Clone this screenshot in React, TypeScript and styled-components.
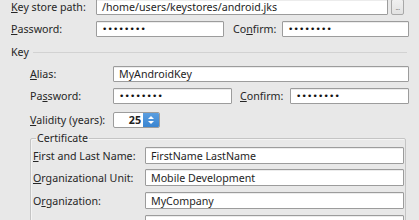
import React from "react";
import styled, { createGlobalStyle } from "styled-components";

const Global = createGlobalStyle`
  html, body { margin: 0; padding: 0; background: #e8e8e8; }
  body { font-family: "Noto Sans", "DejaVu Sans", sans-serif; font-size: 10.67px; color: #262626; }
`;

const Page = styled.div`
  width: 419px;
  height: 220px;
  overflow: hidden;
  box-sizing: border-box;
  padding: 0 10px 0 11px;
  background: #e8e8e8;
`;

const Stack = styled.div<{ $top?: number }>`
  display: flex;
  flex-direction: column;
  margin-top: ${(p) => p.$top ?? 0}px;
`;

const Row = styled.div<{ $h?: number; $mt?: number }>`
  display: flex;
  align-items: center;
  height: ${(p) => p.$h ?? 16}px;
  margin-top: ${(p) => p.$mt ?? 0}px;
`;

const Label = styled.span<{ $w?: number; $ml?: number }>`
  flex: 0 0 ${(p) => p.$w ?? 85}px;
  margin-left: ${(p) => p.$ml ?? 0}px;
  white-space: nowrap;
  line-height: 14px;
`;

const U = styled.span`
  text-decoration: underline;
  text-underline-offset: 1px;
`;

const Input = styled.div<{ $w?: number; $h?: number }>`
  box-sizing: border-box;
  ${(p) => (p.$w ? `flex: 0 0 ${p.$w}px;` : "flex: 1 1 auto;")}
  height: ${(p) => p.$h ?? 16}px;
  background: #fff;
  border: 1px solid #9c9c9c;
  border-radius: 1px;
  box-shadow: inset 0 1px 0 #ececec;
  padding: 0 5px;
  display: flex;
  align-items: center;
  white-space: nowrap;
  overflow: hidden;
  color: #1e1e1e;
`;

const Dots = styled.span`
  font-family: "DejaVu Sans", sans-serif;
  font-size: 9px;
  letter-spacing: 0.2px;
  color: #111;
`;

const DotsButton = styled.div`
  box-sizing: border-box;
  flex: 0 0 13px;
  height: 16px;
  margin-left: 3px;
  margin-right: 5px;
  border: 1px solid #a8a8a8;
  border-radius: 2px;
  background: linear-gradient(#f0f0f0, #e2e2e2);
  color: #888;
  font-size: 7px;
  display: flex;
  align-items: center;
  justify-content: center;
  letter-spacing: -0.5px;
`;

const SectionHead = styled.div`
  display: flex;
  align-items: center;
  height: 14px;
  margin-top: 8px;
`;

const SectionTitle = styled.span`
  line-height: 14px;
`;

const SectionLine = styled.div`
  flex: 1 1 auto;
  height: 1px;
  background: #d2d2d2;
  margin-left: 4px;
  margin-right: 2px;
`;

const Indent = styled.div`
  display: flex;
  flex-direction: column;
  padding-left: 19px;
`;

const Spin = styled.div`
  box-sizing: border-box;
  flex: 0 0 47px;
  height: 16px;
  display: flex;
  border: 1px solid #9c9c9c;
  border-radius: 2px;
  background: #fff;
  overflow: hidden;
`;

const SpinValue = styled.div`
  flex: 1 1 auto;
  display: flex;
  align-items: center;
  justify-content: flex-end;
  padding-right: 2px;
  font-weight: bold;
  color: #222;
`;

const SpinButtons = styled.div`
  flex: 0 0 16px;
  background: linear-gradient(#5a9ee0, #3a85d1);
  display: flex;
  flex-direction: column;
  align-items: center;
  justify-content: center;
`;

const Group = styled.fieldset`
  box-sizing: border-box;
  margin: 4px 3px 0 0;
  padding: 1px 1px 6px 2px;
  border: 1px solid #c4c4c4;
  border-radius: 2px;
  box-shadow: inset 1px 1px 0 #f4f4f4;
  display: flex;
  flex-direction: column;
  min-width: 0;
`;

const Legend = styled.legend`
  padding: 0 1px;
  margin-left: 3px;
  line-height: 12px;
`;

const CertRow = styled.div<{ $mt?: number }>`
  display: flex;
  align-items: center;
  height: 17px;
  margin-top: ${(p) => p.$mt ?? 6}px;
`;

export default function App() {
  return (
    <>
      <Global />
      <Page>
        <Stack $top={-1}>
          <Row>
            <Label>
              <U>K</U>ey store path:
            </Label>
            <Input>/home/users/keystores/android.jks</Input>
            <DotsButton>...</DotsButton>
          </Row>
          <Row $mt={6}>
            <Label>
              <U>P</U>assword:
            </Label>
            <Input $w={128}>
              <Dots>••••••••</Dots>
            </Input>
            <Label $w={49} $ml={9}>
              Co<U>n</U>firm:
            </Label>
            <Input>
              <Dots>••••••••</Dots>
            </Input>
          </Row>
          <SectionHead>
            <SectionTitle>Key</SectionTitle>
            <SectionLine />
          </SectionHead>
          <Indent>
            <Row $mt={7}>
              <Label $w={83}>
                <U>A</U>lias:
              </Label>
              <Input>MyAndroidKey</Input>
            </Row>
            <Row $mt={6}>
              <Label $w={83}>
                Pa<U>s</U>sword:
              </Label>
              <Input $w={119}>
                <Dots>••••••••</Dots>
              </Input>
              <Label $w={50} $ml={8}>
                <U>C</U>onfirm:
              </Label>
              <Input>
                <Dots>••••••••</Dots>
              </Input>
            </Row>
            <Row $mt={8}>
              <Label $w={83}>
                <U>V</U>alidity (years):
              </Label>
              <Spin>
                <SpinValue>25</SpinValue>
                <SpinButtons>
                  <svg width="8" height="12" viewBox="0 0 8 12">
                    <path d="M1 5 L4 2 L7 5 Z" fill="#fff" />
                    <path d="M1 7 L4 10 L7 7 Z" fill="#fff" />
                  </svg>
                </SpinButtons>
              </Spin>
            </Row>
            <Group>
              <Legend>Certificate</Legend>
              <CertRow $mt={2}>
                <Label $w={112}>
                  <U>F</U>irst and Last Name:
                </Label>
                <Input $h={17}>FirstName LastName</Input>
              </CertRow>
              <CertRow $mt={5}>
                <Label $w={112}>
                  <U>O</U>rganizational Unit:
                </Label>
                <Input $h={17}>Mobile Development</Input>
              </CertRow>
              <CertRow>
                <Label $w={112}>
                  O<U>r</U>ganization:
                </Label>
                <Input $h={17}>MyCompany</Input>
              </CertRow>
              <CertRow>
                <Label $w={112}>
                  <U>C</U>ity or Locality:
                </Label>
                <Input $h={17}>MyTown</Input>
              </CertRow>
            </Group>
          </Indent>
        </Stack>
      </Page>
    </>
  );
}
